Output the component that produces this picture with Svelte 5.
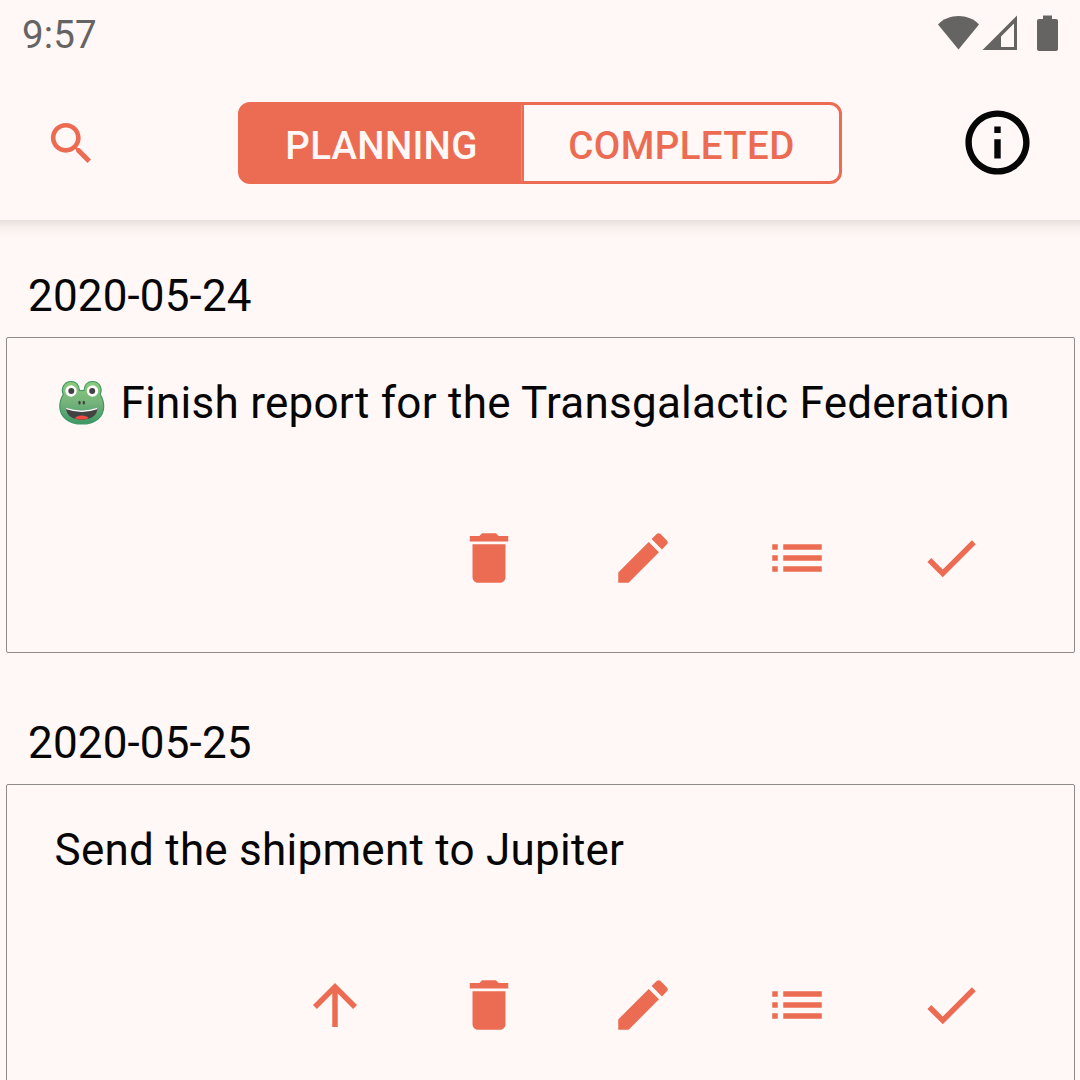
<script>
  const icons = {
    up: 'M4 12l1.41 1.41L11 7.83V20h2V7.83l5.58 5.59L20 12l-8-8-8 8z',
    trash: 'M6 19c0 1.1.9 2 2 2h8c1.1 0 2-.9 2-2V7H6v12zM19 4h-3.5l-1-1h-5l-1 1H5v2h14V4z',
    edit: 'M3 17.25V21h3.75L17.81 9.94l-3.75-3.75L3 17.25zM20.71 7.04c.39-.39.39-1.02 0-1.41l-2.34-2.34c-.39-.39-1.02-.39-1.41 0l-1.83 1.83 3.75 3.75 1.83-1.83z',
    list: 'M3 13h2v-2H3v2zm0 4h2v-2H3v2zm0-8h2V7H3v2zm4 4h14v-2H7v2zm0 4h14v-2H7v2zM7 7v2h14V7H7z',
    check: 'M9 16.17L4.83 12l-1.42 1.41L9 19 21 7l-1.41-1.41z'
  };

  const days = [
    {
      date: '2020-05-24',
      title: 'Finish report for the Transgalactic Federation',
      frog: true,
      actions: ['trash', 'edit', 'list', 'check']
    },
    {
      date: '2020-05-25',
      title: 'Send the shipment to Jupiter',
      frog: false,
      actions: ['up', 'trash', 'edit', 'list', 'check']
    }
  ];

  let tab = $state('planning');
</script>

<div class="screen">
  <header>
    <div class="status">
      <span class="time">9:57</span>
      <svg class="indicators" width="122" height="38" viewBox="0 0 122 38">
        <path d="M0 9.500C10 -2 31 -2 41 9.500L20.500 34.500Z" />
        <path fill-rule="evenodd" d="M44.500 35L79 .5V35ZM63 32H76V8.500L63 21.500Z" />
        <path d="M105 0.500h9v3.500h4q2 0 2 2v28q0 2-2 2h-17q-2 0-2-2v-28q0-2 2-2h4z" />
      </svg>
    </div>
    <div class="bar">
      <button class="search" aria-label="Search">
        <svg width="55" height="55" viewBox="0 0 24 24">
          <path d="M15.500 14h-.79l-.28-.27C15.410 12.590 16 11.110 16 9.500 16 5.910 13.090 3 9.500 3S3 5.910 3 9.500 5.910 16 9.500 16c1.610 0 3.090-.59 4.230-1.570l.27.28v.79l5 4.990L20.490 19l-4.990-5zm-6 0C7.010 14 5 11.990 5 9.500S7.010 5 9.500 5 14 7.010 14 9.500 11.990 14 9.500 14z" />
        </svg>
      </button>
      <div class="tabs">
        <button class="tab first" class:active={tab === 'planning'} onclick={() => (tab = 'planning')}>PLANNING</button>
        <button class="tab" class:active={tab === 'completed'} onclick={() => (tab = 'completed')}>COMPLETED</button>
      </div>
      <button class="info" aria-label="Info">
        <svg width="77" height="77" viewBox="0 0 24 24">
          <path d="M11 17h2v-6h-2v6zm1-15C6.480 2 2 6.480 2 12s4.480 10 10 10 10-4.480 10-10S17.520 2 12 2zm0 18c-4.410 0-8-3.590-8-8s3.590-8 8-8 8 3.590 8 8-3.590 8-8 8zM11 9h2V7h-2v2z" />
        </svg>
      </button>
    </div>
  </header>

  <main>
    {#each days as day}
      <section>
        <h2>{day.date}</h2>
        <article>
          <div class="title">
            {#if day.frog}
              <svg class="frog" width="46" height="46" viewBox="0 0 46 46">
                <defs>
                  <linearGradient id="skin" x1="0" y1="0" x2="0" y2="1">
                    <stop offset="0" stop-color="#8ccb7c" />
                    <stop offset="0.5" stop-color="#75b37b" />
                    <stop offset="1" stop-color="#3d9765" />
                  </linearGradient>
                </defs>
                <path d="M20.500 10.500H25C25.500 4.500 29 1.500 33.500 1.500C40 1.500 44 8 41.200 14.500C43.500 18 44.700 22 44.700 26.500C44.700 37 36 44 23 44S.8 37 .8 26.500C.8 22 2 18 4.300 14.500C1.500 8 5.500 1.500 12 1.500C16.500 1.500 20 4.500 20.500 10.500Z" fill="url(#skin)" stroke="#3e9865" stroke-width="1.200" />
                <g fill="#fff">
                  <circle cx="12" cy="11" r="5.700" />
                  <circle cx="33.500" cy="11" r="5.700" />
                </g>
                <g fill="#424242">
                  <circle cx="12.300" cy="11" r="3" />
                  <circle cx="33.200" cy="11" r="3" />
                  <ellipse cx="20.500" cy="22.700" rx="1.200" ry="1.900" />
                  <ellipse cx="24.800" cy="22.700" rx="1.200" ry="1.900" />
                  <path d="M7 28Q22.800 33 38.500 28C38 36.500 31 39.700 22.800 39.700S7.500 36.500 7 28Z" />
                </g>
                <path d="M7 27.800Q22.800 33 38.500 27.800L38 29.300Q22.800 34.800 7.500 29.300Z" fill="#fff" />
                <path d="M15.700 38.200C18 34.500 27.500 34.500 29.700 38.200Q22.700 40.700 15.700 38.200Z" fill="#f44840" />
              </svg>
            {/if}
            <span>{day.title}</span>
          </div>
          <div class="actions">
            {#each day.actions as name}
              <button aria-label={name}>
                <svg width="66" height="66" viewBox="0 0 24 24"><path d={icons[name]} /></svg>
              </button>
            {/each}
          </div>
        </article>
      </section>
    {/each}
  </main>
</div>

<style>
  :global(body) {
    margin: 0;
    background: #fff8f6;
  }
  .screen {
    height: 1080px;
    overflow: hidden;
    background: #fff8f6;
    font-family: Roboto, sans-serif;
    color: #060606;
  }
  button {
    padding: 0;
    border: 0;
    background: none;
    color: inherit;
    font: inherit;
  }
  svg {
    display: block;
    fill: currentColor;
  }
  header {
    height: 220px;
  }
  .status {
    display: flex;
    justify-content: space-between;
    align-items: center;
    box-sizing: border-box;
    height: 66px;
    padding: 2px 20px 0 22px;
    color: #666462;
  }
  .time {
    font-size: 38.500px;
    letter-spacing: 0.100px;
  }
  .bar {
    display: flex;
    justify-content: space-between;
    align-items: center;
    height: 154px;
    padding: 0 44px;
  }
  .search {
    color: #eb6c52;
  }
  .info {
    padding-bottom: 2px;
  }
  .tabs {
    display: flex;
    box-sizing: border-box;
    width: 604px;
    height: 82px;
    margin-left: 22px;
    border: 3px solid #eb6c52;
    border-radius: 12px;
    background: linear-gradient(#eb6c52, #eb6c52) left / 283px 100% no-repeat;
    overflow: hidden;
  }
  .tab {
    flex: 1;
    color: #eb6c52;
    font-size: 38.500px;
    font-weight: 500;
    letter-spacing: 0.350px;
    padding-top: 4px;
  }
  .tab.first {
    flex: none;
    box-sizing: border-box;
    width: 281px;
    margin-right: 2px;
    border-right: 1px solid #f08b75;
    padding-left: 1px;
    letter-spacing: 0.250px;
  }
  .tab.active {
    background: #eb6c52;
    color: #fff8f6;
  }
  main {
    padding: 36px 5px 0 6px;
    background: linear-gradient(
        rgba(50, 45, 25, 0.12),
        rgba(50, 45, 25, 0.05) 6px,
        rgba(50, 45, 25, 0.015) 14px,
        rgba(50, 45, 25, 0) 20px
      )
      no-repeat;
  }
  section {
    height: 447px;
  }
  h2 {
    box-sizing: border-box;
    height: 81px;
    margin: 0;
    padding-left: 22px;
    font-size: 44px;
    line-height: 81px;
    font-weight: 400;
    letter-spacing: 0.150px;
  }
  article {
    box-sizing: border-box;
    height: 316px;
    border: 1px solid #8e8b8a;
    border-radius: 2px;
    padding: 33px 90px 0 47.500px;
  }
  .title {
    display: flex;
    align-items: center;
    height: 64px;
    font-size: 44px;
    white-space: nowrap;
    letter-spacing: 0.250px;
  }
  .frog {
    margin: 0 15.500px 0 4.500px;
    flex: none;
  }
  .actions {
    display: flex;
    justify-content: flex-end;
    gap: 88px;
    margin-top: 90px;
  }
  .actions button {
    color: #eb6c52;
  }
</style>
